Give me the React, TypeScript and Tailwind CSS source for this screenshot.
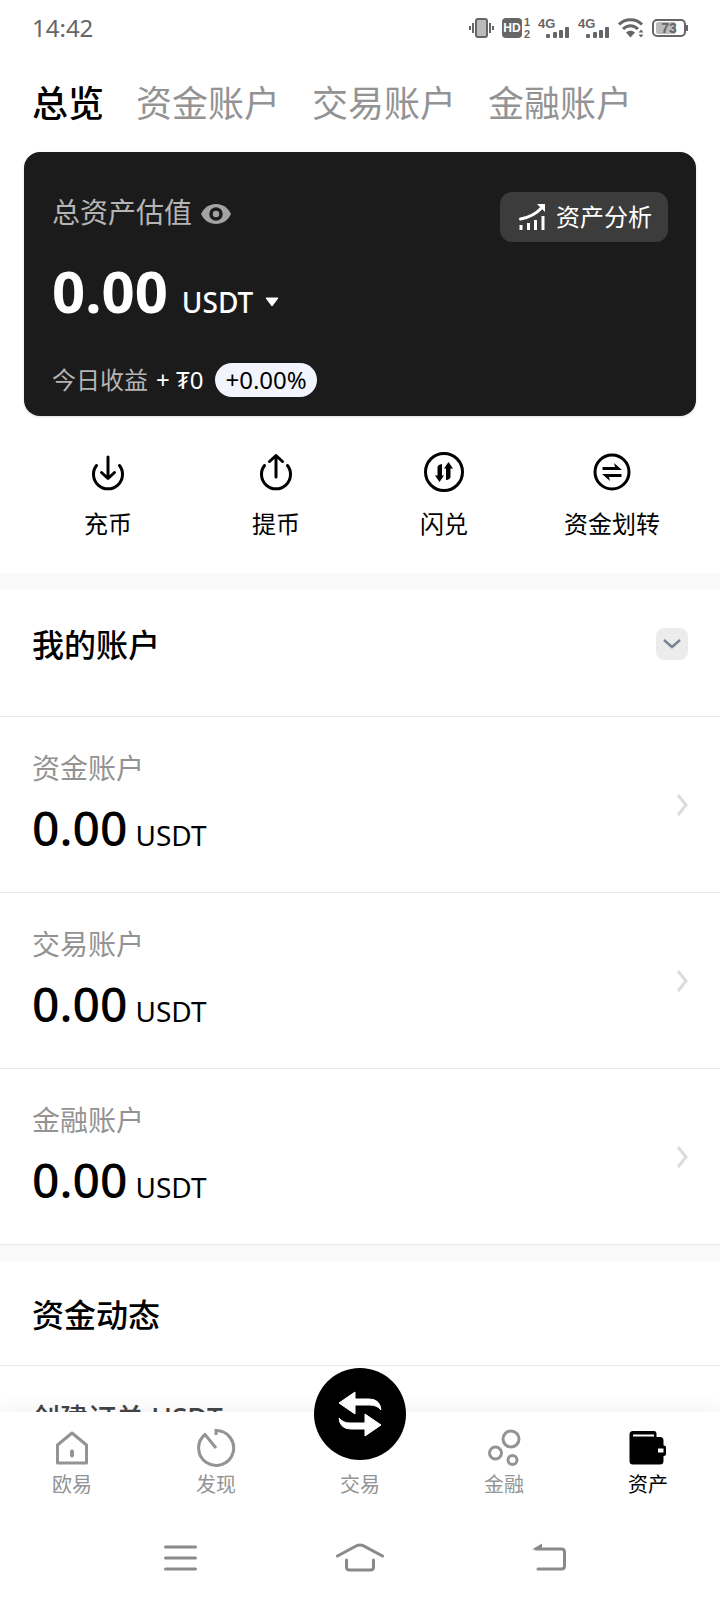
import type { ReactNode } from "react";

const tabs = ["总览", "资金账户", "交易账户", "金融账户"];

const accounts = [
  { name: "资金账户", balance: "0.00" },
  { name: "交易账户", balance: "0.00" },
  { name: "金融账户", balance: "0.00" },
];

function Signal() {
  return (
    <svg className="overflow-visible" width="32" height="22" viewBox="0 0 32 22" fill="#666">
      <text x="0" y="11" fontSize="13" fontWeight="700">
        4G
      </text>
      <rect x="8" y="17" width="4" height="4" rx="1" />
      <rect x="15" y="15" width="4" height="6" rx="1" />
      <rect x="21" y="13" width="4" height="8" rx="1" />
      <rect x="27" y="10" width="4" height="11" rx="1" />
    </svg>
  );
}

function StatusBar() {
  return (
    <header className="flex h-14 shrink-0 items-center justify-between px-8 text-2xl text-[#666]">
      <time>14:42</time>
      <div className="flex items-center gap-2 font-['Liberation_Sans',sans-serif]">
        <svg width="26" height="22" viewBox="0 0 26 22" fill="none" stroke="#666" strokeWidth="2">
          <rect x="8" y="2" width="11" height="18" rx="2" fill="#bbb" />
          <path d="M5 6v10M2 9v4M22 6v10M25 9v4" />
        </svg>
        <svg className="overflow-visible" width="28" height="22" viewBox="0 0 28 22" fill="#666">
          <rect x="0" y="1" width="20" height="20" rx="4" />
          <text x="10" y="15" fontSize="12" fontWeight="700" fill="#fff" textAnchor="middle">
            HD
          </text>
          <text x="22" y="9" fontSize="11" fontWeight="700">
            1
          </text>
          <text x="22" y="21" fontSize="11" fontWeight="700">
            2
          </text>
        </svg>
        <Signal />
        <Signal />
        <svg width="26" height="22" viewBox="0 0 26 22" fill="none" stroke="#666" strokeWidth="3">
          <path d="M1 7.500c6-6.500 17-6.500 23 0M5 12c4.500-4.500 10.500-4.500 15 0" />
          <path d="M8 15.500c2.500-2.500 6.500-2.500 9 0l-4.500 5z" fill="#666" stroke="none" />
          <path d="M20.500 15.500l2.500-3 2.500 3zM20.500 17.500l2.500 3 2.500-3z" fill="#666" stroke="none" />
        </svg>
        <svg width="36" height="22" viewBox="0 0 36 22" fill="none">
          <rect x="1" y="3" width="32" height="16" rx="4" stroke="#666" strokeWidth="2" />
          <rect x="4" y="5" width="20" height="12" rx="2" fill="#bbb" />
          <path d="M35 8v6" stroke="#666" strokeWidth="2" />
          <text x="17" y="16" fontSize="14" fontWeight="700" fill="#666" textAnchor="middle">
            73
          </text>
        </svg>
      </div>
    </header>
  );
}

function Summary() {
  return (
    <section className="mx-6 rounded-2xl bg-[#1b1b1b] px-7 pt-10 pb-[18px] text-white shadow-sm">
      <div className="flex items-start justify-between">
        <div className="flex h-10 items-center gap-2 text-[28px] text-[#b5b5b5]">
          总资产估值
          <button type="button" aria-label="隐藏资产" className="mt-1">
            <svg width="32" height="22" viewBox="0 0 32 22">
              <path d="M1 11C4 4.500 9.500 1 16 1s12 3.500 15 10c-3 6.500-8.500 10-15 10S4 17.500 1 11z" fill="#a3a3a3" />
              <circle cx="16" cy="11" r="5" fill="#a3a3a3" stroke="#1b1b1b" strokeWidth="3.500" />
            </svg>
          </button>
        </div>
        <button
          type="button"
          className="flex h-[50px] items-center gap-2 rounded-xl bg-[#3c3c3c] px-4 text-2xl"
        >
          <svg width="32" height="28" viewBox="0 0 32 28" fill="none" stroke="#fff" strokeWidth="3">
            <path d="M4.500 16C13 14.500 20 11 26 4.500" strokeLinecap="round" />
            <path d="M21 1h8v8z" fill="#fff" stroke="none" />
            <path d="M5 27v-5M12.500 27v-7M19.500 27V17M27 27V13" />
          </svg>
          资产分析
        </button>
      </div>

      <div className="mt-2 flex h-20 items-baseline gap-3.5">
        <strong className="text-[58px] leading-[82px]">0.00</strong>
        <button type="button" className="flex items-center gap-3 text-[28px] font-medium">
          USDT
          <svg width="14" height="10" viewBox="0 0 14 10">
            <path d="M1 1h12L7 9z" fill="#fff" stroke="#fff" strokeLinejoin="round" />
          </svg>
        </button>
      </div>

      <div className="mt-8 flex h-9 items-center gap-2 text-2xl">
        <span className="text-[#b5b5b5]">今日收益</span>
        <span>+ ₮0</span>
        <span className="ml-1 rounded-full bg-[#f1f4fd] px-2.5 leading-[34px] text-black">+0.00%</span>
      </div>
    </section>
  );
}

function Action({ label, children }: { label: string; children: ReactNode }) {
  return (
    <button type="button" className="flex flex-1 flex-col items-center gap-3.5 text-2xl">
      <svg
        width="44"
        height="44"
        viewBox="0 0 44 44"
        fill="none"
        stroke="#000"
        strokeWidth="3"
        strokeLinecap="round"
        strokeLinejoin="round"
      >
        {children}
      </svg>
      {label}
    </button>
  );
}

function Actions() {
  return (
    <section className="mx-6 flex pt-[34px] pb-[33px]">
      <Action label="充币">
        <path d="M10.500 15.500a14.500 14.500 0 1 0 23 0" />
        <path d="M22 7v21M15.500 22.500l6.500 6 6.500-6" />
      </Action>
      <Action label="提币">
        <path d="M10.500 15.500a14.500 14.500 0 1 0 23 0" />
        <path d="M22 27V6M15.500 11.500L22 5.500l6.500 6" />
      </Action>
      <Action label="闪兑">
        <circle cx="22" cy="22" r="18.500" />
        <path
          d="M20 14v11.500h2L17.500 32 13 25.500h2.500V17q.5-2.500 4.500-3zM24 30V18.500h-2L26.500 12l4.500 6.500h-2.500V27q-.5 2.500-4.500 3z"
          fill="#000"
          stroke="none"
        />
      </Action>
      <Action label="资金划转">
        <circle cx="22" cy="22" r="17" />
        <path
          d="M12.500 17H25l-1-4 8 7H12.500zM31.500 27H19l1 4-8-7h19.500z"
          fill="#000"
          stroke="none"
        />
      </Action>
    </section>
  );
}

function Accounts() {
  return (
    <section className="border-t-[16px] border-[#f9f9f9]">
      <div className="flex h-[127px] items-start justify-between px-8 pt-8">
        <h2 className="text-[32px] leading-[48px] font-medium">我的账户</h2>
        <button
          type="button"
          aria-label="展开"
          className="mt-[7px] flex h-8 w-8 items-center justify-center rounded-lg bg-[#ececec]"
        >
          <svg width="18" height="12" viewBox="0 0 18 12" fill="none" stroke="#7c8594" strokeWidth="2.500">
            <path d="M1 2l8 7 8-7" />
          </svg>
        </button>
      </div>
      <ul>
        {accounts.map((account) => (
          <li key={account.name} className="border-t border-[#e8e8e8]">
            <a href="#" className="flex h-[175px] items-center justify-between px-8">
              <div className="pt-0.5">
                <p className="text-[28px] leading-10 text-[#939393]">{account.name}</p>
                <p className="mt-1 flex items-baseline gap-2">
                  <span className="text-5xl leading-[72px] font-medium">{account.balance}</span>
                  <span className="text-[28px]">USDT</span>
                </p>
              </div>
              <svg width="12" height="24" viewBox="0 0 12 24" fill="none" stroke="#dcdcdc" strokeWidth="3">
                <path d="M2 2l8 10-8 10" />
              </svg>
            </a>
          </li>
        ))}
      </ul>
    </section>
  );
}

function Activity() {
  return (
    <section className="border-t border-[#e8e8e8]">
      <div className="border-t-[16px] border-[#f9f9f9] px-8">
        <h2 className="pt-[30px] pb-[26px] text-[32px] leading-[48px] font-medium">资金动态</h2>
      </div>
      <p className="border-t border-[#e8e8e8] px-8 pt-8 text-[28px] leading-10 font-medium text-[#444]">
        创建订单 USDT
      </p>
    </section>
  );
}

function NavItem({ label, active, children }: { label: string; active?: boolean; children: ReactNode }) {
  return (
    <a
      href="#"
      className={`flex flex-1 flex-col items-center gap-[3px] text-xl ${active ? "text-black" : "text-[#939393]"}`}
    >
      <svg
        width="40"
        height="40"
        viewBox="0 0 40 40"
        fill="none"
        stroke="currentColor"
        strokeWidth="3"
        strokeLinejoin="round"
      >
        {children}
      </svg>
      {label}
    </a>
  );
}

function BottomNav() {
  return (
    <nav className="relative flex h-[104px] shrink-0 bg-white pt-4 shadow-[0_-4px_20px_rgba(0,0,0,0.05)]">
      <NavItem label="欧易">
        <path d="M5.500 17L20 5l14.500 12v18h-29z" />
        <path d="M20 23.500v4" strokeWidth="4" strokeLinecap="round" />
      </NavItem>
      <NavItem label="发现">
        <path d="M20 20L9 6.500A17.500 17.500 0 1 0 20 2.500V7" strokeLinejoin="miter" />
      </NavItem>
      <a href="#" className="flex flex-1 flex-col items-center gap-[11px] text-xl text-[#939393]">
        <span className="-mt-[60px] flex h-[92px] w-[92px] items-center justify-center rounded-full bg-black">
          <svg width="44" height="46" viewBox="0 0 44 46" fill="#fff" stroke="#fff" strokeLinejoin="round">
            <path d="M1 12L17 1v7h14q11 0 12 11-4-5-11-5H17v9z" />
            <path d="M43 34L27 45v-7H13Q2 38 1 27q4 5 11 5h15v-9z" />
          </svg>
        </span>
        交易
      </a>
      <NavItem label="金融">
        <circle cx="27" cy="11" r="8" />
        <circle cx="11.500" cy="25" r="6" />
        <circle cx="28.500" cy="32" r="4.500" />
      </NavItem>
      <NavItem label="资产" active>
        <path
          d="M5 3h21q2.500 0 2.500 3v3H32q3.500 0 3.500 3.500v5H36q2 0 2 2V26q0 2-2 2h-.5v5q0 3.500-3.500 3.500H5Q1.500 36.500 1.500 33V6.500Q1.500 3 5 3z"
          fill="currentColor"
          stroke="none"
        />
        <path d="M5 7.500h21" stroke="#fff" strokeWidth="2" />
        <path d="M30 22.500h5.500" stroke="#fff" strokeWidth="4" />
      </NavItem>
    </nav>
  );
}

function SystemBar() {
  return (
    <div className="relative flex h-[84px] shrink-0 items-center justify-center gap-[124px] bg-white">
      <button type="button" aria-label="最近任务">
        <svg width="56" height="30" viewBox="0 0 56 30" stroke="#8a8a8a" strokeWidth="3" strokeLinecap="round">
          <path d="M13.500 4h30M13.500 15h30M13.500 26h30" />
        </svg>
      </button>
      <button type="button" aria-label="主页">
        <svg
          width="56"
          height="30"
          viewBox="0 0 56 30"
          fill="none"
          stroke="#8a8a8a"
          strokeWidth="3"
          strokeLinecap="round"
        >
          <path d="M5.500 13L24.500 2.800q3.500-1.800 7 0L50.500 13M14.500 17v7q0 3 3 3h21q3 0 3-3v-7" />
        </svg>
      </button>
      <button type="button" aria-label="返回">
        <svg
          width="56"
          height="30"
          viewBox="0 0 56 30"
          fill="none"
          stroke="#8a8a8a"
          strokeWidth="3"
          strokeLinecap="round"
        >
          <path d="M24 6h25.500q3 0 3 3v14q0 3-3 3H26" />
          <path d="M20 6.500l10-6v6z" fill="#8a8a8a" stroke="none" />
        </svg>
      </button>
    </div>
  );
}

export default function App() {
  return (
    <div className="flex h-screen flex-col bg-white font-['Noto_Sans','Noto_Sans_CJK_SC',sans-serif] text-black">
      <StatusBar />
      <main className="min-h-0 flex-1 overflow-hidden">
        <div className="flex h-24 items-center gap-8 px-8 text-4xl">
          {tabs.map((tab, i) => (
            <button key={tab} type="button" className={i === 0 ? "font-medium" : "text-[#939393]"}>
              {tab}
            </button>
          ))}
        </div>
        <Summary />
        <Actions />
        <Accounts />
        <Activity />
      </main>
      <BottomNav />
      <SystemBar />
    </div>
  );
}
